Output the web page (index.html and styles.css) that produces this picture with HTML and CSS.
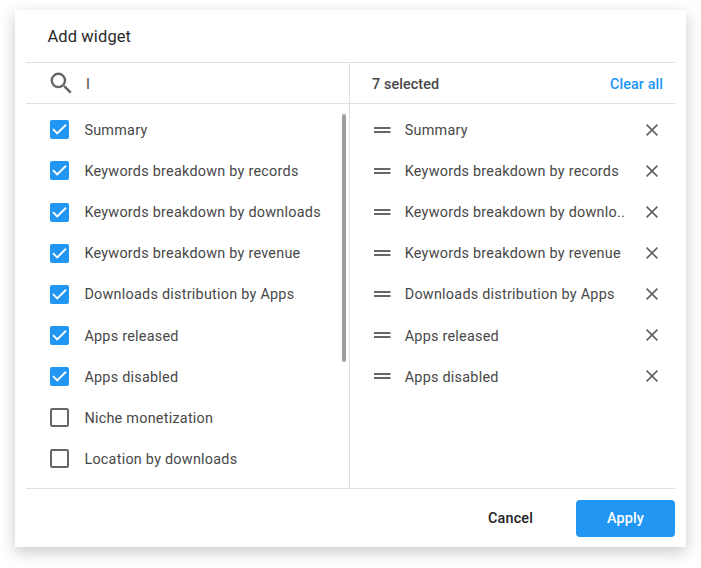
FILE: index.html
```html
<!DOCTYPE html>
<html lang="en">
<head>
<meta charset="utf-8">
<title>Add widget</title>
<link rel="stylesheet" href="styles.css">
</head>
<body>
<svg class="sprite" width="0" height="0">
  <symbol id="checked" viewBox="0 0 19 19"><rect width="19" height="19" rx="2" fill="#2196f3"/><path d="M3 9.2l4.2 4.2 8.8-8.6" fill="none" stroke="#fff" stroke-width="1.9"/></symbol>
  <symbol id="unchecked" viewBox="0 0 19 19"><rect x="1" y="1" width="17" height="17" rx="1.2" fill="none" stroke="#666" stroke-width="2"/></symbol>
  <symbol id="drag" viewBox="0 0 17 6"><path d="M0 1h16.5M0 5h16.5" stroke="#666" stroke-width="2"/></symbol>
  <symbol id="close" viewBox="0 0 12 12"><path d="M.6.6l10.8 10.8M11.4.6L.6 11.4" stroke="#616161" stroke-width="1.6"/></symbol>
</svg>
<main class="modal">
  <header class="title">Add widget</header>
  <div class="columns">
    <section class="available">
      <div class="bar search">
        <svg class="search-icon" viewBox="0 0 24 24"><path fill="#666" d="M15.5 14h-.79l-.28-.27A6.471 6.471 0 0 0 16 9.5 6.5 6.5 0 1 0 9.5 16c1.61 0 3.09-.59 4.23-1.57l.27.28v.79l5 4.99L20.49 19l-4.99-5zm-6 0C7.01 14 5 11.99 5 9.5S7.01 5 9.5 5 14 7.01 14 9.5 11.99 14 9.5 14z"/></svg>
        <span class="query">I</span>
      </div>
      <div class="scroll">
        <ul class="list">
          <li><svg class="box"><use href="#checked"/></svg><span>Summary</span></li>
          <li><svg class="box"><use href="#checked"/></svg><span>Keywords breakdown by records</span></li>
          <li><svg class="box"><use href="#checked"/></svg><span>Keywords breakdown by downloads</span></li>
          <li><svg class="box"><use href="#checked"/></svg><span>Keywords breakdown by revenue</span></li>
          <li><svg class="box"><use href="#checked"/></svg><span>Downloads distribution by Apps</span></li>
          <li><svg class="box"><use href="#checked"/></svg><span>Apps released</span></li>
          <li><svg class="box"><use href="#checked"/></svg><span>Apps disabled</span></li>
          <li><svg class="box"><use href="#unchecked"/></svg><span>Niche monetization</span></li>
          <li><svg class="box"><use href="#unchecked"/></svg><span>Location by downloads</span></li>
        </ul>
        <div class="thumb"></div>
      </div>
    </section>
    <section class="selected">
      <div class="bar count"><span>7 selected</span><a class="clear">Clear all</a></div>
      <ul class="list">
        <li><svg class="drag"><use href="#drag"/></svg><span>Summary</span><svg class="close"><use href="#close"/></svg></li>
        <li><svg class="drag"><use href="#drag"/></svg><span>Keywords breakdown by records</span><svg class="close"><use href="#close"/></svg></li>
        <li><svg class="drag"><use href="#drag"/></svg><span>Keywords breakdown by downlo..</span><svg class="close"><use href="#close"/></svg></li>
        <li><svg class="drag"><use href="#drag"/></svg><span>Keywords breakdown by revenue</span><svg class="close"><use href="#close"/></svg></li>
        <li><svg class="drag"><use href="#drag"/></svg><span>Downloads distribution by Apps</span><svg class="close"><use href="#close"/></svg></li>
        <li><svg class="drag"><use href="#drag"/></svg><span>Apps released</span><svg class="close"><use href="#close"/></svg></li>
        <li><svg class="drag"><use href="#drag"/></svg><span>Apps disabled</span><svg class="close"><use href="#close"/></svg></li>
      </ul>
    </section>
  </div>
  <footer class="actions">
    <button class="cancel">Cancel</button>
    <button class="apply">Apply</button>
  </footer>
</main>
</body>
</html>
```
FILE: styles.css
```css
* { box-sizing: border-box; }
body {
  margin: 0;
  padding: 10px 15px 0;
  height: 568px;
  overflow: hidden;
  background: #fff;
  font: 400 14.4px/20px Roboto, sans-serif;
  letter-spacing: 0.25px;
  color: #484848;
}
.sprite { display: block; height: 0; }
.modal {
  width: 671px;
  height: 537px;
  padding: 0 11px;
  display: flex;
  flex-direction: column;
  background: #fff;
  box-shadow: 0 5px 15px rgba(0, 0, 0, 0.22);
}
.title {
  height: 52px;
  padding-left: 21.5px;
  line-height: 53px;
  font-size: 16.5px;
  letter-spacing: 0.1px;
  color: #2a2a2a;
}
.columns {
  height: 427px;
  display: grid;
  grid-template-columns: 324px 1fr;
  border-top: 1px solid #e0e0e0;
  border-bottom: 1px solid #e0e0e0;
}
.available { border-right: 1px solid #e0e0e0; }
.bar {
  height: 41px;
  display: flex;
  align-items: center;
  border-bottom: 1px solid #e0e0e0;
}
.bar span, .bar a { padding-top: 4px; }
.search { padding-left: 21.4px; }
.search-icon { width: 28.8px; height: 28.8px; margin-top: 1px; }
.query { margin-left: 9.8px; }
.count {
  padding: 0 12px 0 22px;
  justify-content: space-between;
  font-weight: 500;
  letter-spacing: 0.08px;
}
.clear { color: #2196f3; }
.scroll {
  display: flex;
  justify-content: space-between;
}
.list {
  list-style: none;
  margin: 0;
  padding: 5.5px 0 0;
}
.list li {
  height: 41.1px;
  display: flex;
  align-items: center;
}
.list span { padding-top: 2px; }
.available li { padding-left: 24.2px; }
.box { width: 19px; height: 19px; margin: -0.4px 15.2px 0 0; }
.thumb {
  width: 4px;
  height: 248px;
  margin: 10px 3px 0 0;
  border-radius: 2px;
  background: #9e9e9e;
}
.selected li { padding: 0 17px 0 24px; }
.drag { width: 17px; height: 6px; margin: -0.8px 13.7px 0 0; }
.close { width: 12px; height: 12px; margin: -0.8px 0 0 auto; }
.actions {
  height: 58px;
  display: flex;
  justify-content: flex-end;
  align-items: center;
}
button {
  border: 0;
  padding: 0;
  height: 37px;
  background: none;
  font: 500 14.4px/37px Roboto, sans-serif;
  letter-spacing: 0.15px;
  color: #212121;
}
.cancel { margin-right: 43px; }
.apply {
  width: 99px;
  border-radius: 4px;
  background: #2196f3;
  color: #fff;
}
```
